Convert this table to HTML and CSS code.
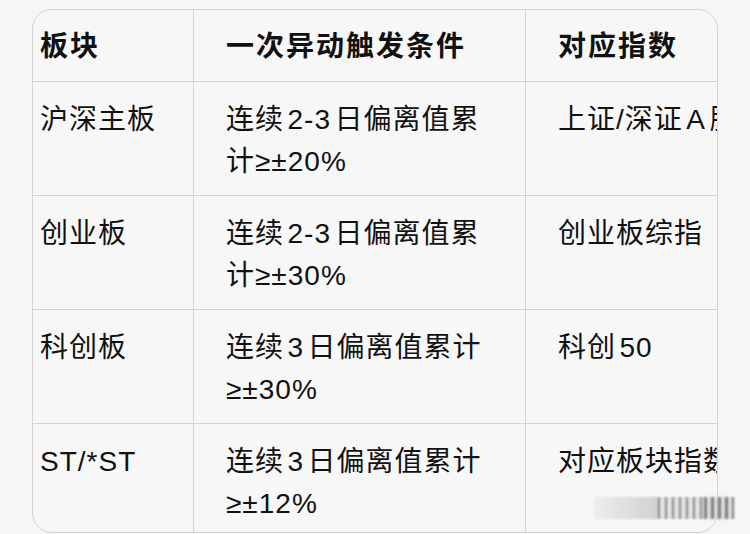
FILE: index.html
```html
<!DOCTYPE html>
<html lang="zh-CN">
<head>
<meta charset="utf-8">
<link rel="stylesheet" href="styles.css">
</head>
<body>
<div class="frame">
  <table class="grid">
    <thead>
      <tr>
        <th class="c1">板块</th>
        <th class="c2">一次异动触发条件</th>
        <th class="c3">对应指数</th>
      </tr>
    </thead>
    <tbody>
      <tr>
        <td class="c1">沪深主板</td>
        <td class="c2">连续2-3日偏离值累计≥±20%</td>
        <td class="c3">上证/深证A股指数</td>
      </tr>
      <tr>
        <td class="c1">创业板</td>
        <td class="c2">连续2-3日偏离值累计≥±30%</td>
        <td class="c3">创业板综指</td>
      </tr>
      <tr>
        <td class="c1">科创板</td>
        <td class="c2">连续3日偏离值累计≥±30%</td>
        <td class="c3">科创50</td>
      </tr>
      <tr>
        <td class="c1">ST/*ST</td>
        <td class="c2">连续3日偏离值累计≥±12%</td>
        <td class="c3">对应板块指数</td>
      </tr>
    </tbody>
  </table>
</div>
<div class="mark"><span class="m1"></span><span class="m2"></span><span class="m3"></span></div>
</body>
</html>
```

FILE: styles.css
```css
html, body {
  margin: 0;
  padding: 0;
  background: #f6f6f6;
}
body {
  width: 750px;
  height: 534px;
  overflow: hidden;
  position: relative;
  font-family: "Liberation Sans", "Noto Sans CJK SC", sans-serif;
  color: #111;
}
.frame {
  margin: 9px 0 0 32px;
  width: 684px;
  height: 522px;
  border: 1px solid #d3d3d3;
  border-radius: 20px;
  overflow: hidden;
  background: #f7f7f7;
}
.grid {
  border-collapse: separate;
  border-spacing: 0;
  table-layout: fixed;
  width: 753px;
}
.grid th, .grid td {
  box-sizing: border-box;
  border-right: 1px solid #d3d3d3;
  border-bottom: 1px solid #d3d3d3;
  text-align: left;
  vertical-align: top;
  font-size: 28px;
  line-height: 42px;
  text-autospace: normal;
}
.grid th {
  height: 72px;
  vertical-align: middle;
  font-weight: 700;
  letter-spacing: 2px;
  padding: 3px 14px 0 32px;
}
.grid td {
  height: 114px;
  padding: 17px 31px 11px 32px;
  font-weight: 400;
  letter-spacing: 1px;
}
.grid .c1 { width: 161px; padding-left: 7px; }
.grid .c2 { width: 332px; }
.grid .c3 { width: 260px; white-space: nowrap; overflow: hidden; }
.mark {
  position: absolute;
  left: 594px;
  top: 497px;
  width: 140px;
  height: 22px;
  display: flex;
  filter: blur(1.2px);
}
.m1 {
  width: 64px;
  background: linear-gradient(90deg, rgba(200,200,200,0.2), rgba(170,170,170,0.5));
}
.m2 {
  width: 46px;
  background: repeating-linear-gradient(90deg, rgba(40,40,40,0.55) 0 2px, rgba(210,210,210,0.5) 2px 7px);
}
.m3 {
  width: 30px;
  background: repeating-linear-gradient(90deg, rgba(40,40,40,0.6) 0 3px, rgba(200,200,200,0.5) 3px 7px);
}
```
